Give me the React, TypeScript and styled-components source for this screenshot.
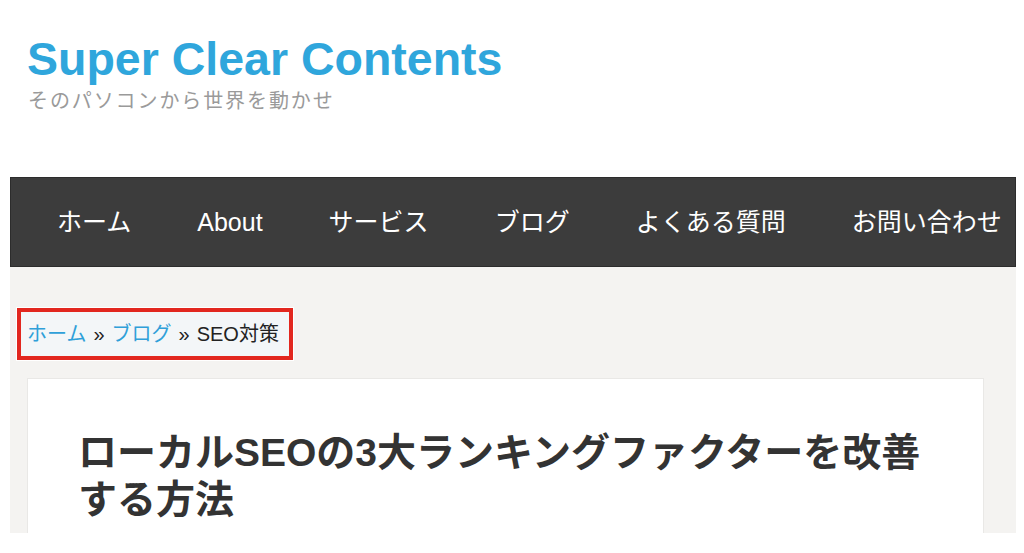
import styled, { createGlobalStyle } from "styled-components";

const GlobalStyle = createGlobalStyle`
  html, body {
    margin: 0;
    padding: 0;
    background: #ffffff;
  }
  body {
    font-family: "Liberation Sans", "Noto Sans CJK JP", sans-serif;
    color: #333333;
  }
`;

const Page = styled.div`
  width: 1024px;
  height: 553px;
  overflow: hidden;
  background: #ffffff;
`;

const Header = styled.header`
  height: 177px;
  box-sizing: border-box;
  padding: 36px 0 0 27px;
`;

const SiteTitle = styled.h1`
  margin: 0;
  font-size: 46.5px;
  line-height: 46px;
  font-weight: 700;
  color: #2fa6dc;
`;

const Tagline = styled.p`
  margin: 7px 0 0 1px;
  font-size: 20px;
  line-height: 24px;
  letter-spacing: 1.9px;
  color: #9a9a9a;
`;

const Nav = styled.nav`
  margin: 0 8px 0 10px;
  height: 90px;
  box-sizing: border-box;
  display: flex;
  align-items: center;
  padding-left: 13px;
  background: #3c3c3c;
  border: 1px solid #2c2c2c;
  overflow: hidden;
`;

const NavItem = styled.a`
  flex-shrink: 0;
  padding: 0 33px;
  font-size: 25px;
  line-height: 30px;
  color: #ffffff;
  text-decoration: none;
  white-space: nowrap;
`;

const Main = styled.main`
  margin: 0 8px 0 10px;
  height: 266px;
  overflow: hidden;
  background: #f4f3f1;
  padding-top: 41px;
  box-sizing: border-box;
`;

const Breadcrumb = styled.div`
  display: inline-block;
  margin-left: 7px;
  padding: 10px 10px 10px 6px;
  border: 4px solid #e2271f;
  outline: 1px solid #ffffff;
  background: #f3f6f8;
  font-size: 20px;
  line-height: 24px;
  color: #222222;
`;

const Crumb = styled.a`
  color: #2fa0d9;
  text-decoration: none;
`;

const Sep = styled.span`
  margin: 0 7px;
  color: #222222;
`;

const Card = styled.article`
  margin: 18px 0 0 17px;
  width: 957px;
  box-sizing: border-box;
  min-height: 300px;
  padding: 50px 50px;
  background: #ffffff;
  border: 1px solid #e9e8e6;
`;

const PostTitle = styled.h2`
  margin: 0;
  font-size: 39px;
  line-height: 47px;
  font-weight: 700;
  color: #333333;
`;

const menu = ["ホーム", "About", "サービス", "ブログ", "よくある質問", "お問い合わせ"];

export default function App() {
  return (
    <Page>
      <GlobalStyle />
      <Header>
        <SiteTitle>Super Clear Contents</SiteTitle>
        <Tagline>そのパソコンから世界を動かせ</Tagline>
      </Header>
      <Nav>
        {menu.map((m) => (
          <NavItem key={m} href="#">
            {m}
          </NavItem>
        ))}
      </Nav>
      <Main>
        <Breadcrumb>
          <Crumb href="#">ホーム</Crumb>
          <Sep>»</Sep>
          <Crumb href="#">ブログ</Crumb>
          <Sep>»</Sep>
          SEO対策
        </Breadcrumb>
        <Card>
          <PostTitle>ローカルSEOの3大ランキングファクターを改善する方法</PostTitle>
        </Card>
      </Main>
    </Page>
  );
}
